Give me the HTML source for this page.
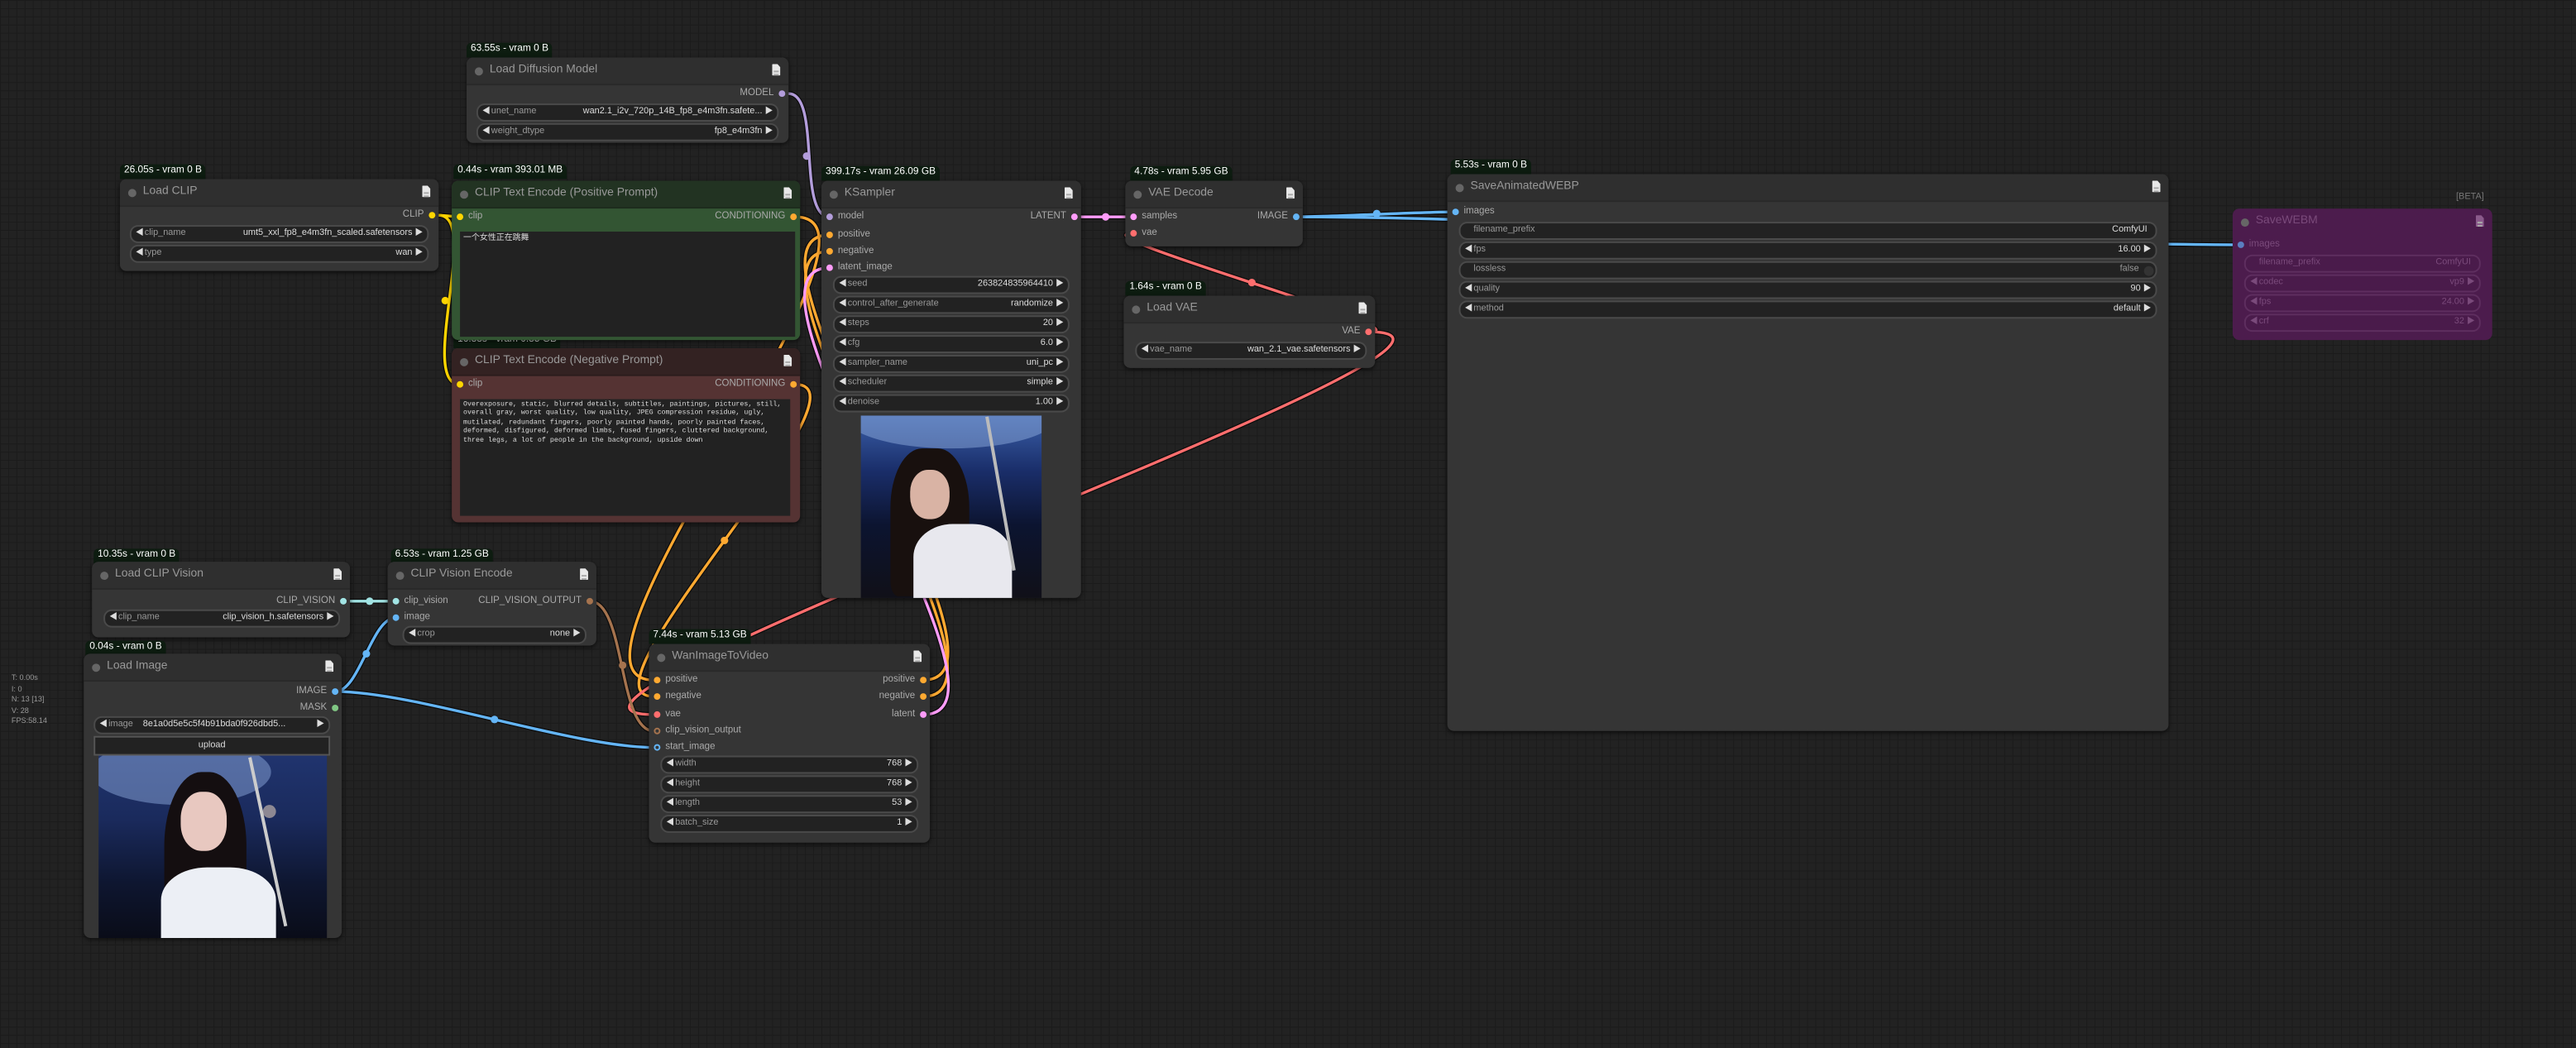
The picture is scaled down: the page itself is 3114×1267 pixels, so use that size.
<!DOCTYPE html>
<html><head><meta charset="utf-8">
<style>
html,body{margin:0;padding:0;width:3114px;height:1266px;overflow:hidden;background:#222;}
#c{position:absolute;left:0;top:0;width:1568px;height:638px;transform:scale(1.98597);transform-origin:0 0;
background-color:#222;
background-image:linear-gradient(#1b1b1b 0.5px,transparent 0.5px),linear-gradient(90deg,#1b1b1b 0.5px,transparent 0.5px);
background-size:5px 5px;font-family:"Liberation Sans","Noto Sans CJK SC",sans-serif;}
svg.links{position:absolute;left:0;top:0;}
.badge{position:absolute;background:#0d1c10;color:#fff;font-size:6px;height:9px;line-height:9px;padding:0 2.5px;border-radius:3px 3px 0 0;white-space:nowrap;}
.node{position:absolute;background:#353535;border-radius:4px;box-shadow:0 1px 3px rgba(0,0,0,.6);}
.title{position:absolute;left:0;right:0;top:0;height:16px;line-height:16px;color:#999;font-size:7px;padding-left:14px;background:#2f2f2f;border-bottom:0.5px solid #292929;border-radius:4px 4px 0 0;white-space:nowrap;}
.title::before{content:"";position:absolute;left:5px;top:5.5px;width:5px;height:5px;border-radius:50%;background:#666;}
.doc{position:absolute;right:5px;top:4px;width:5px;height:7px;background:#e8e8e8;border-radius:0.5px;clip-path:polygon(0 0,65% 0,100% 28%,100% 100%,0 100%);}
.doc::after{content:"";position:absolute;left:1px;top:3.5px;width:3px;height:1.6px;border-top:0.4px solid #aaa;border-bottom:0.4px solid #aaa;}
.w{position:absolute;height:9px;line-height:9px;background:#222;border:0.6px solid #4a4a4a;border-radius:5px;font-size:5.5px;color:#999;white-space:nowrap;overflow:hidden;}
.w .l{position:absolute;left:8px;}
.w .v{position:absolute;right:9px;color:#ddd;}
.w .al{position:absolute;left:2.5px;top:0;color:#ddd;font-size:5px;}
.w .ar{position:absolute;right:2.5px;top:0;color:#ddd;font-size:5px;}
.s{position:absolute;font-size:5.8px;color:#aaa;white-space:nowrap;line-height:8px;}
.dot{position:absolute;width:4px;height:4px;border-radius:50%;}
.ta{position:absolute;background:#222;color:#ddd;font-size:4.2px;line-height:5.4px;padding:2px;box-sizing:border-box;font-family:"Liberation Mono","Noto Sans CJK SC",monospace;}
</style></head><body>
<div id="c">
<svg class="links" width="1568" height="638" viewBox="0 0 1568 638">
<g fill="none" stroke-linecap="round">
<g stroke="#000" stroke-width="3" opacity="0.6">
<path d="M480 57 C500 57,485 132,505 132"/>
<path d="M267 131 L280 132"/><path d="M267 131 C293 131,254 234,280 234"/>
<path d="M484 132 C558 132,324 414,398 414"/><path d="M484 234 C536 234,346 424,398 424"/>
<path d="M562 414 C631 414,436 143,505 143"/><path d="M562 424 C630 424,437 153,505 153"/>
<path d="M562 435 C632 435,435 163,505 163"/>
<path d="M655 132 L690 132"/>
<path d="M789 132 C813 132,862 129,886 129"/><path d="M789 132 C933 132,1219 149,1363 149"/>
<path d="M833 202 C872 202,651 142,690 142"/><path d="M833 202 C956 202,275 435,398 435"/>
<path d="M209 366 L241 366"/><path d="M204 421 C219 421,226 376,241 376"/><path d="M204 421 C253 421,349 455,398 455"/>
<path d="M359 366 C381 366,376 445,398 445"/>
</g>
<g stroke-width="1.7">
<path stroke="#b39ddb" d="M480 57 C500 57,485 132,505 132"/>
<path stroke="#ffd500" d="M267 131 L280 132"/><path stroke="#ffd500" d="M267 131 C293 131,254 234,280 234"/>
<path stroke="#ffa931" d="M484 132 C558 132,324 414,398 414"/><path stroke="#ffa931" d="M484 234 C536 234,346 424,398 424"/>
<path stroke="#ffa931" d="M562 414 C631 414,436 143,505 143"/><path stroke="#ffa931" d="M562 424 C630 424,437 153,505 153"/>
<path stroke="#ff9cf9" d="M562 435 C632 435,435 163,505 163"/>
<path stroke="#ff9cf9" d="M655 132 L690 132"/>
<path stroke="#64b5f6" d="M789 132 C813 132,862 129,886 129"/><path stroke="#64b5f6" d="M789 132 C933 132,1219 149,1363 149"/>
<path stroke="#ff6e6e" d="M833 202 C872 202,651 142,690 142"/><path stroke="#ff6e6e" d="M833 202 C956 202,275 435,398 435"/>
<path stroke="#a1e3e3" d="M209 366 L241 366"/>
<path stroke="#64b5f6" d="M204 421 C219 421,226 376,241 376"/><path stroke="#64b5f6" d="M204 421 C253 421,349 455,398 455"/>
<path stroke="#a5734e" d="M359 366 C381 366,376 445,398 445"/>
</g>
</g>
<g>
<circle cx="491" cy="95" r="2.3" fill="#b39ddb"/>
<circle cx="271" cy="183" r="2.3" fill="#ffd500"/>
<circle cx="441" cy="273" r="2.3" fill="#ffa931"/>
<circle cx="441" cy="329" r="2.3" fill="#ffa931"/>
<circle cx="673" cy="132" r="2.3" fill="#ff9cf9"/>
<circle cx="838" cy="130" r="2.3" fill="#64b5f6"/>
<circle cx="762" cy="172" r="2.3" fill="#ff6e6e"/>
<circle cx="225" cy="366" r="2.3" fill="#a1e3e3"/>
<circle cx="223" cy="398" r="2.3" fill="#64b5f6"/>
<circle cx="301" cy="438" r="2.3" fill="#64b5f6"/>
<circle cx="379" cy="405" r="2.3" fill="#a5734e"/>
</g>
</svg>

<!-- Load Diffusion Model -->
<div class="badge" style="left:284px;top:26px">63.55s - vram 0 B</div>
<div class="node" style="left:284px;top:35px;width:196px;height:52px">
<div class="title">Load Diffusion Model<div class="doc"></div></div>
<div class="s" style="right:9px;top:18px">MODEL</div><div class="dot" style="right:2px;top:20px;background:#b39ddb"></div>
<div class="w" style="left:6px;right:6px;top:28px"><span class="al">◀</span><span class="l">unet_name</span><span class="v">wan2.1_i2v_720p_14B_fp8_e4m3fn.safete...</span><span class="ar">▶</span></div>
<div class="w" style="left:6px;right:6px;top:40px"><span class="al">◀</span><span class="l">weight_dtype</span><span class="v">fp8_e4m3fn</span><span class="ar">▶</span></div>
</div>

<!-- Load CLIP -->
<div class="badge" style="left:73px;top:100px">26.05s - vram 0 B</div>
<div class="node" style="left:73px;top:109px;width:194px;height:56px">
<div class="title">Load CLIP<div class="doc"></div></div>
<div class="s" style="right:9px;top:18px">CLIP</div><div class="dot" style="right:2px;top:20px;background:#ffd500"></div>
<div class="w" style="left:6px;right:6px;top:28px"><span class="al">◀</span><span class="l">clip_name</span><span class="v">umt5_xxl_fp8_e4m3fn_scaled.safetensors</span><span class="ar">▶</span></div>
<div class="w" style="left:6px;right:6px;top:40px"><span class="al">◀</span><span class="l">type</span><span class="v">wan</span><span class="ar">▶</span></div>
</div>

<!-- Negative -->
<div class="badge" style="left:276px;top:203px">16.88s - vram 0.85 GB</div>
<div class="node" style="left:275px;top:212px;width:212px;height:106px;background:#533">
<div class="title" style="background:#322;border-bottom-color:#2a1c1c">CLIP Text Encode (Negative Prompt)<div class="doc"></div></div>
<div class="dot" style="left:3px;top:20px;background:#ffd500"></div><div class="s" style="left:10px;top:18px">clip</div>
<div class="s" style="right:9px;top:18px">CONDITIONING</div><div class="dot" style="right:2px;top:20px;background:#ffa931"></div>
<div class="ta" style="left:5px;top:31px;width:201px;height:71px">Overexposure, static, blurred details, subtitles, paintings, pictures, still, overall gray, worst quality, low quality, JPEG compression residue, ugly, mutilated, redundant fingers, poorly painted hands, poorly painted faces, deformed, disfigured, deformed limbs, fused fingers, cluttered background, three legs, a lot of people in the background, upside down</div>
</div>

<!-- Positive -->
<div class="badge" style="left:276px;top:100px">0.44s - vram 393.01 MB</div>
<div class="node" style="left:275px;top:110px;width:212px;height:97px;background:#353">
<div class="title" style="background:#232;border-bottom-color:#1c2a1c">CLIP Text Encode (Positive Prompt)<div class="doc"></div></div>
<div class="dot" style="left:3px;top:20px;background:#ffd500"></div><div class="s" style="left:10px;top:18px">clip</div>
<div class="s" style="right:9px;top:18px">CONDITIONING</div><div class="dot" style="right:2px;top:20px;background:#ffa931"></div>
<div class="ta" style="left:5px;top:31px;width:204px;height:64px;font-size:5px;font-family:'Liberation Sans','Noto Sans CJK SC',sans-serif">一个女性正在跳舞</div>
</div>

<!-- KSampler -->
<div class="badge" style="left:500px;top:101px">399.17s - vram 26.09 GB</div>
<div class="node" style="left:500px;top:110px;width:158px;height:254px">
<div class="title">KSampler<div class="doc"></div></div>
<div class="dot" style="left:3px;top:20px;background:#b39ddb"></div><div class="s" style="left:10px;top:18px">model</div>
<div class="s" style="right:9px;top:18px">LATENT</div><div class="dot" style="right:2px;top:20px;background:#ff9cf9"></div>
<div class="dot" style="left:3px;top:31px;background:#ffa931"></div><div class="s" style="left:10px;top:29px">positive</div>
<div class="dot" style="left:3px;top:41px;background:#ffa931"></div><div class="s" style="left:10px;top:39px">negative</div>
<div class="dot" style="left:3px;top:51px;background:#ff9cf9"></div><div class="s" style="left:10px;top:49px">latent_image</div>
<div class="w" style="left:7px;right:7px;top:58px"><span class="al">◀</span><span class="l">seed</span><span class="v">263824835964410</span><span class="ar">▶</span></div>
<div class="w" style="left:7px;right:7px;top:70px"><span class="al">◀</span><span class="l">control_after_generate</span><span class="v">randomize</span><span class="ar">▶</span></div>
<div class="w" style="left:7px;right:7px;top:82px"><span class="al">◀</span><span class="l">steps</span><span class="v">20</span><span class="ar">▶</span></div>
<div class="w" style="left:7px;right:7px;top:94px"><span class="al">◀</span><span class="l">cfg</span><span class="v">6.0</span><span class="ar">▶</span></div>
<div class="w" style="left:7px;right:7px;top:106px"><span class="al">◀</span><span class="l">sampler_name</span><span class="v">uni_pc</span><span class="ar">▶</span></div>
<div class="w" style="left:7px;right:7px;top:118px"><span class="al">◀</span><span class="l">scheduler</span><span class="v">simple</span><span class="ar">▶</span></div>
<div class="w" style="left:7px;right:7px;top:130px"><span class="al">◀</span><span class="l">denoise</span><span class="v">1.00</span><span class="ar">▶</span></div>
<div style="position:absolute;left:24px;top:143px;width:110px;height:111px;overflow:hidden;background:linear-gradient(180deg,#3a5fa8 0%,#1a2e6a 30%,#0c1430 60%,#101018 100%)">
<div style="position:absolute;left:-10px;top:-20px;width:130px;height:40px;border-radius:50%;background:rgba(140,170,220,.5)"></div>
<div style="position:absolute;left:18px;top:20px;width:48px;height:90px;border-radius:40% 40% 10% 10%;background:#18100e"></div>
<div style="position:absolute;left:30px;top:33px;width:24px;height:30px;border-radius:45%;background:#d9b3a4"></div>
<div style="position:absolute;left:32px;top:66px;width:60px;height:50px;border-radius:40% 40% 0 0;background:#e8e8ee"></div>
<div style="position:absolute;left:84px;top:0;width:1.5px;height:95px;background:#bbb;transform:rotate(-10deg)"></div>
</div>
</div>

<!-- VAE Decode -->
<div class="badge" style="left:688px;top:101px">4.78s - vram 5.95 GB</div>
<div class="node" style="left:685px;top:110px;width:108px;height:40px">
<div class="title">VAE Decode<div class="doc"></div></div>
<div class="dot" style="left:3px;top:20px;background:#ff9cf9"></div><div class="s" style="left:10px;top:18px">samples</div>
<div class="s" style="right:9px;top:18px">IMAGE</div><div class="dot" style="right:2px;top:20px;background:#64b5f6"></div>
<div class="dot" style="left:3px;top:30px;background:#ff6e6e"></div><div class="s" style="left:10px;top:28px">vae</div>
</div>

<!-- Load VAE -->
<div class="badge" style="left:685px;top:171px">1.64s - vram 0 B</div>
<div class="node" style="left:684px;top:180px;width:153px;height:44px">
<div class="title">Load VAE<div class="doc"></div></div>
<div class="s" style="right:9px;top:18px">VAE</div><div class="dot" style="right:2px;top:20px;background:#ff6e6e"></div>
<div class="w" style="left:7px;right:5px;top:28px"><span class="al">◀</span><span class="l">vae_name</span><span class="v">wan_2.1_vae.safetensors</span><span class="ar">▶</span></div>
</div>

<!-- SaveAnimatedWEBP -->
<div class="badge" style="left:883px;top:97px">5.53s - vram 0 B</div>
<div class="node" style="left:881px;top:106px;width:439px;height:339px">
<div class="title">SaveAnimatedWEBP<div class="doc"></div></div>
<div class="dot" style="left:3px;top:21px;background:#64b5f6"></div><div class="s" style="left:10px;top:19px">images</div>
<div class="w" style="left:7px;right:7px;top:29px"><span class="l">filename_prefix</span><span class="v" style="right:5px">ComfyUI</span></div>
<div class="w" style="left:7px;right:7px;top:41px"><span class="al">◀</span><span class="l">fps</span><span class="v">16.00</span><span class="ar">▶</span></div>
<div class="w" style="left:7px;right:7px;top:53px"><span class="l">lossless</span><span class="v" style="right:10px;color:#999">false</span><span style="position:absolute;right:1.5px;top:1.5px;width:6px;height:6px;border-radius:50%;background:#333"></span></div>
<div class="w" style="left:7px;right:7px;top:65px"><span class="al">◀</span><span class="l">quality</span><span class="v">90</span><span class="ar">▶</span></div>
<div class="w" style="left:7px;right:7px;top:77px"><span class="al">◀</span><span class="l">method</span><span class="v">default</span><span class="ar">▶</span></div>
</div>

<!-- SaveWEBM (bypassed) -->
<div style="position:absolute;left:1495px;top:117px;font-size:5.5px;color:#777">[BETA]</div>
<div class="node" style="left:1359px;top:127px;width:158px;height:80px;background:#4c1c4d;box-shadow:none">
<div class="title" style="background:transparent;color:#7a4a7b;border:none">SaveWEBM<div class="doc" style="background:#8a5a8b"></div></div>
<style>.pw{background:#4a1b4b!important;border-color:#5e2e5f!important;color:#7a4a7b!important}.pw span{color:#7a4a7b!important}</style>
<div class="dot" style="left:3px;top:20px;background:#5a7fc0"></div><div class="s" style="left:10px;top:18px;color:#7a4a7b">images</div>
<div class="w pw" style="left:7px;right:7px;top:28px"><span class="l">filename_prefix</span><span class="v" style="right:5px">ComfyUI</span></div>
<div class="w pw" style="left:7px;right:7px;top:40px"><span class="al">◀</span><span class="l">codec</span><span class="v">vp9</span><span class="ar">▶</span></div>
<div class="w pw" style="left:7px;right:7px;top:52px"><span class="al">◀</span><span class="l">fps</span><span class="v">24.00</span><span class="ar">▶</span></div>
<div class="w pw" style="left:7px;right:7px;top:64px"><span class="al">◀</span><span class="l">crf</span><span class="v">32</span><span class="ar">▶</span></div>
</div>

<!-- Load CLIP Vision -->
<div class="badge" style="left:57px;top:334px">10.35s - vram 0 B</div>
<div class="node" style="left:56px;top:342px;width:157px;height:46px">
<div class="title">Load CLIP Vision<div class="doc"></div></div>
<div class="s" style="right:9px;top:20px">CLIP_VISION</div><div class="dot" style="right:2px;top:22px;background:#a1e3e3"></div>
<div class="w" style="left:7px;right:6px;top:29px"><span class="al">◀</span><span class="l">clip_name</span><span class="v">clip_vision_h.safetensors</span><span class="ar">▶</span></div>
</div>

<!-- CLIP Vision Encode -->
<div class="badge" style="left:238px;top:334px">6.53s - vram 1.25 GB</div>
<div class="node" style="left:236px;top:342px;width:127px;height:51px">
<div class="title">CLIP Vision Encode<div class="doc"></div></div>
<div class="dot" style="left:3px;top:22px;background:#a1e3e3"></div><div class="s" style="left:10px;top:20px">clip_vision</div>
<div class="s" style="right:9px;top:20px">CLIP_VISION_OUTPUT</div><div class="dot" style="right:2px;top:22px;background:#a5734e"></div>
<div class="dot" style="left:3px;top:32px;background:#64b5f6"></div><div class="s" style="left:10px;top:30px">image</div>
<div class="w" style="left:9px;right:6px;top:39px"><span class="al">◀</span><span class="l">crop</span><span class="v">none</span><span class="ar">▶</span></div>
</div>

<!-- Load Image -->
<div class="badge" style="left:52px;top:390px">0.04s - vram 0 B</div>
<div class="node" style="left:51px;top:398px;width:157px;height:173px">
<div class="title">Load Image<div class="doc"></div></div>
<div class="s" style="right:9px;top:19px">IMAGE</div><div class="dot" style="right:2px;top:21px;background:#64b5f6"></div>
<div class="s" style="right:9px;top:29px">MASK</div><div class="dot" style="right:2px;top:31px;background:#81c784"></div>
<div class="w" style="left:6px;right:7px;top:38px"><span class="al">◀</span><span class="l">image</span><span class="v" style="left:29px;right:auto">8e1a0d5e5c5f4b91bda0f926dbd5...</span><span class="ar">▶</span></div>
<div style="position:absolute;left:6px;right:7px;top:50px;height:10px;line-height:10px;background:#222;border:0.6px solid #555;text-align:center;color:#ddd;font-size:5.5px">upload</div>
<div style="position:absolute;left:9px;top:62px;width:139px;height:111px;overflow:hidden;background:linear-gradient(180deg,#20346e 0%,#1a2a5c 35%,#0e1630 70%,#0a0c18 100%)">
<div style="position:absolute;left:-5px;top:-10px;width:110px;height:40px;border-radius:50%;background:rgba(150,180,230,.45)"></div>
<div style="position:absolute;left:100px;top:30px;width:8px;height:8px;border-radius:50%;background:rgba(255,230,200,.5)"></div>
<div style="position:absolute;left:40px;top:10px;width:50px;height:100px;border-radius:45% 45% 10% 10%;background:#140e10"></div>
<div style="position:absolute;left:50px;top:22px;width:28px;height:36px;border-radius:45%;background:#e8c8c0"></div>
<div style="position:absolute;left:38px;top:68px;width:70px;height:50px;border-radius:40% 40% 0 0;background:#eceff5"></div>
<div style="position:absolute;left:102px;top:0;width:1.5px;height:105px;background:#ccc;transform:rotate(-12deg)"></div>
</div>
</div>

<!-- WanImageToVideo -->
<div class="badge" style="left:395px;top:383px">7.44s - vram 5.13 GB</div>
<div class="node" style="left:395px;top:392px;width:171px;height:121px">
<div class="title">WanImageToVideo<div class="doc"></div></div>
<div class="dot" style="left:3px;top:20px;background:#ffa931"></div><div class="s" style="left:10px;top:18px">positive</div>
<div class="dot" style="left:3px;top:30px;background:#ffa931"></div><div class="s" style="left:10px;top:28px">negative</div>
<div class="dot" style="left:3px;top:41px;background:#ff6e6e"></div><div class="s" style="left:10px;top:39px">vae</div>
<div class="dot" style="left:3px;top:51px;border:1px solid #a5734e;width:2px;height:2px"></div><div class="s" style="left:10px;top:49px">clip_vision_output</div>
<div class="dot" style="left:3px;top:61px;border:1px solid #64b5f6;width:2px;height:2px"></div><div class="s" style="left:10px;top:59px">start_image</div>
<div class="s" style="right:9px;top:18px">positive</div><div class="dot" style="right:2px;top:20px;background:#ffa931"></div>
<div class="s" style="right:9px;top:28px">negative</div><div class="dot" style="right:2px;top:30px;background:#ffa931"></div>
<div class="s" style="right:9px;top:39px">latent</div><div class="dot" style="right:2px;top:41px;background:#ff9cf9"></div>
<div class="w" style="left:7px;right:7px;top:68px"><span class="al">◀</span><span class="l">width</span><span class="v">768</span><span class="ar">▶</span></div>
<div class="w" style="left:7px;right:7px;top:80px"><span class="al">◀</span><span class="l">height</span><span class="v">768</span><span class="ar">▶</span></div>
<div class="w" style="left:7px;right:7px;top:92px"><span class="al">◀</span><span class="l">length</span><span class="v">53</span><span class="ar">▶</span></div>
<div class="w" style="left:7px;right:7px;top:104px"><span class="al">◀</span><span class="l">batch_size</span><span class="v">1</span><span class="ar">▶</span></div>
</div>

<!-- stats -->
<div style="position:absolute;left:7px;top:410px;font-size:4.6px;line-height:6.5px;color:#999">T: 0.00s<br>I: 0<br>N: 13 [13]<br>V: 28<br>FPS:58.14</div>
</div>
</body></html>
